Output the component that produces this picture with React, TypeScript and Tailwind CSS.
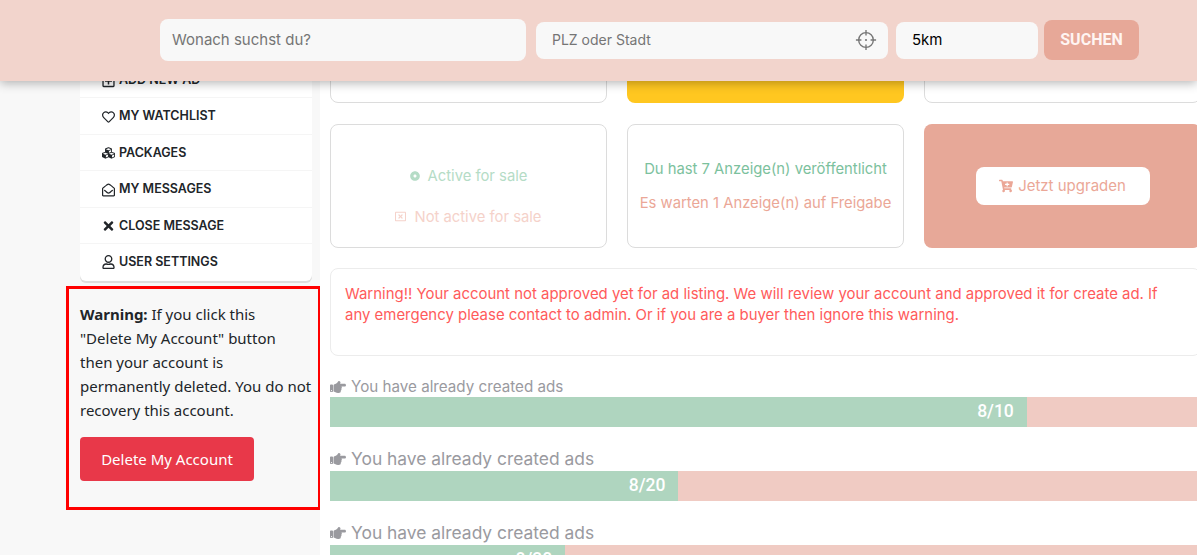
import { FaCubes, FaDotCircle, FaHandPointRight, FaRegEnvelopeOpen, FaRegHeart, FaRegPlusSquare, FaRegUser, FaRegWindowClose, FaCartPlus, FaTimes } from "react-icons/fa";

const menu = [
  { label: "ADD NEW AD", icon: <FaRegPlusSquare />, row: "h-[36px]" },
  { label: "MY WATCHLIST", icon: <FaRegHeart />, row: "h-[36.5px]" },
  { label: "PACKAGES", icon: <FaCubes />, row: "h-[36.5px]" },
  { label: "MY MESSAGES", icon: <FaRegEnvelopeOpen />, row: "h-[36.5px]" },
  { label: "CLOSE MESSAGE", icon: <FaTimes />, row: "h-[36.5px]" },
  { label: "USER SETTINGS", icon: <FaRegUser />, row: "h-[36.5px]" },
];

const bars = [
  { used: "8/10", width: "80%", text: "text-[15.2px]", gap: "h-[22px]" },
  { used: "8/20", width: "40%", text: "text-[17.4px]", gap: "h-[26px]" },
  { used: "8/30", width: "27%", text: "text-[17.4px]", gap: "h-[26px]" },
];

function Crosshair() {
  return (
    <svg viewBox="0 0 24 24" className="h-[22px] w-[22px] text-[#777]" fill="none" stroke="currentColor" strokeWidth="1.5">
      <circle cx="12" cy="12" r="8" />
      <path d="M12 1v6M12 17v6M1 12h6M17 12h6" />
      <circle cx="12" cy="12" r="1.2" fill="currentColor" stroke="none" />
    </svg>
  );
}

export default function App() {
  return (
    <div className="relative h-[555px] w-[1197px] overflow-hidden bg-[#f8f8f8] font-['Inter',sans-serif]">
      {/* Header */}
      <header className="absolute left-0 top-0 z-10 flex h-[81px] w-full items-center bg-[#f2d4cc] pb-[1px] pl-[160px] shadow-[0_2px_10px_rgba(0,0,0,0.3)]">
        <div className="flex h-[42px] w-[366px] items-center rounded-lg bg-[#f8f8f8] px-[12px] text-[15px] text-[#757575]">
          Wonach suchst du?
        </div>
        <div className="ml-[10px] mt-[1px] flex h-[37px] w-[352px] items-center justify-between rounded-lg bg-[#f8f8f8] pb-[2px] pl-[16px] pr-[11px] text-sm text-[#757575]">
          PLZ oder Stadt
          <Crosshair />
        </div>
        <div className="ml-[8px] mt-[1px] flex h-[37px] w-[142px] items-center rounded-lg bg-[#f8f8f8] px-[16px] text-[15px] text-black">
          5km
        </div>
        <button className="ml-[6px] h-[40px] w-[95px] rounded-lg bg-[#e7a898] font-['Roboto',sans-serif] text-base font-bold text-[#fff5f2]">
          SUCHEN
        </button>
      </header>

      <div className="flex h-full">
        {/* Sidebar */}
        <aside className="w-[320px] shrink-0">
          <div className="ml-[80px] w-[232px] rounded-b-md bg-white pt-[62px] shadow-[0_2px_0_#dedede]">
            {menu.map((item) => (
              <div
                key={item.label}
                className={`flex items-center gap-[4px] border-b border-[#f5f5f5] pl-[22px] pt-[2px] text-[12.5px] font-semibold text-[#212529] last:border-b-0 last:pt-0 ${item.row}`}
              >
                <span className="flex w-[13px] justify-center text-[14px]">{item.icon}</span>
                {item.label}
              </div>
            ))}
          </div>

          <div className="ml-[66px] mt-[5px] h-[224px] w-[255px] border-[3px] border-[#ff0000] pl-[11px] pt-[13px] font-['Noto_Sans',sans-serif] text-[15px] leading-[24px] text-[#212529]">
            <p className="whitespace-nowrap">
              <b>Warning:</b> If you click this
              <br />
              "Delete My Account" button
              <br />
              then your account is
              <br />
              permanently deleted. You do not
              <br />
              recovery this account.
            </p>
            <button className="mt-[15px] h-[44px] w-[174px] rounded-[4px] bg-[#e83849] text-[15px] text-white">
              Delete My Account
            </button>
          </div>
        </aside>

        {/* Main */}
        <main className="w-[877px] shrink-0 bg-white pl-[10px]">
          <div className="grid w-[871px] grid-cols-3 gap-x-[20px] gap-y-[21px]">
            <div className="h-[103px] rounded-lg border border-[#dcdcdc]" />
            <div className="h-[103px] rounded-lg bg-[#ffc720]" />
            <div className="h-[103px] rounded-lg border border-[#dcdcdc]" />

            <div className="flex h-[124px] flex-col items-center justify-center gap-[21px] rounded-lg border border-[#dcdcdc] pt-[20px] text-[14.8px] leading-[20px]">
              <div className="flex items-center gap-[8px] text-[#b5dcc6]">
                <FaDotCircle className="text-[10px]" />
                Active for sale
              </div>
              <div className="flex items-center gap-[8px] text-[#f5d2ca]">
                <FaRegWindowClose className="text-[11px]" />
                Not active for sale
              </div>
            </div>

            <div className="flex h-[124px] flex-col items-center justify-center gap-[14px] rounded-lg border border-[#dcdcdc] text-[14.8px] leading-[20px]">
              <div className="text-[#7cc19d]">Du hast 7 Anzeige(n) veröffentlicht</div>
              <div className="text-[#eba797]">Es warten 1 Anzeige(n) auf Freigabe</div>
            </div>

            <div className="flex h-[124px] items-center justify-center rounded-lg bg-[#e7a898]">
              <div className="flex h-[38px] w-[174px] items-center justify-center gap-[5px] rounded-lg bg-white text-[15px] text-[#eba797]">
                <FaCartPlus className="text-[14px]" />
                Jetzt upgraden
              </div>
            </div>
          </div>

          <div className="mt-[20px] h-[88px] w-[871px] rounded-lg border border-[#ececec] px-[14px] pt-[15px] text-[14.95px] leading-[21px] text-[#ff5b5b]">
            Warning!! Your account not approved yet for ad listing. We will review your account and approved it for create ad. If any emergency please contact to admin. Or if you are a buyer then ignore this warning.
          </div>

          <div className="mt-[19px] w-[871px]">
            {bars.map((bar) => (
              <div key={bar.used} className="mb-[18px]">
                <div className={`flex items-center gap-[5px] pt-[2px] text-[#9a9a9f] ${bar.gap} ${bar.text}`}>
                  <FaHandPointRight className="text-[16px]" />
                  You have already created ads
                </div>
                <div className="h-[30px] bg-[#f0cbc3]">
                  <div
                    className="flex h-full items-center justify-end bg-[#afd5bf] pb-[2px] pr-[13px] font-['Roboto',sans-serif] text-[17.5px] font-medium text-white"
                    style={{ width: bar.width }}
                  >
                    {bar.used}
                  </div>
                </div>
              </div>
            ))}
          </div>
        </main>
      </div>
    </div>
  );
}
